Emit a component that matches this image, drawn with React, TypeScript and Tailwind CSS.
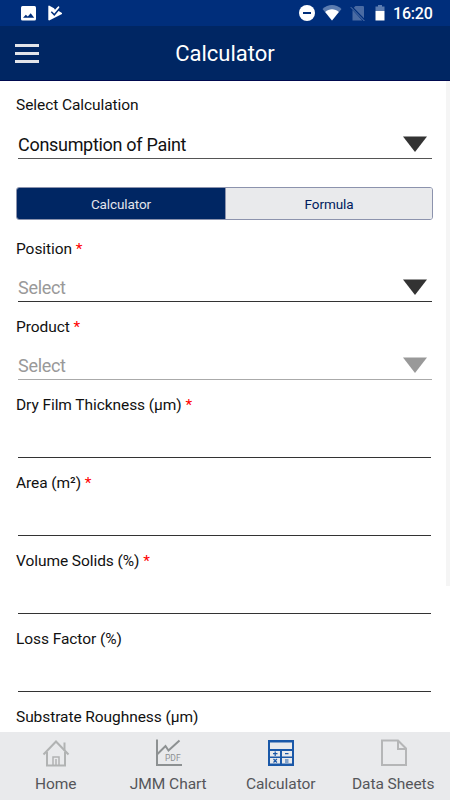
import type { ReactNode } from "react";

type FieldProps = {
  label: string;
  required?: boolean;
  value?: string;
  select?: boolean;
  muted?: boolean;
  disabled?: boolean;
  lead?: boolean;
};

type TabItem = {
  label: string;
  icon: ReactNode;
};

const fields: FieldProps[] = [
  { label: "Position", required: true, value: "Select", select: true, muted: true },
  { label: "Product", required: true, value: "Select", select: true, muted: true, disabled: true },
  { label: "Dry Film Thickness (µm)", required: true },
  { label: "Area (m²)", required: true },
  { label: "Volume Solids (%)", required: true },
  { label: "Loss Factor (%)" },
  { label: "Substrate Roughness (µm)" },
];

function StatusBar() {
  return (
    <div className="flex h-[26px] shrink-0 items-center bg-[#002e7b] pr-[18px] pl-[21px] text-white">
      <svg width="15" height="15" viewBox="0 0 15 15" className="mt-px">
        <rect width="15" height="14.5" rx="1.5" fill="#fff" />
        <path d="M2 11.7 4.8 8.8l2 1.7 2.9-3.2 3.5 4.4z" fill="#002e7b" />
      </svg>
      <svg width="15" height="16" viewBox="0 0 15 16" className="ml-3">
        <path d="M.3 1 1 .4 6 3.2l1 1.6L9.5 2 11 1l.5 2.5-1.6 2L14 8v1L1.2 15.5.3 15z" fill="#fff" />
        <path d="m3.3 6.8 3 3L12 3" fill="none" stroke="#002e7b" strokeWidth="1.5" />
      </svg>

      <div className="ml-auto flex items-center">
        <svg width="16" height="16" viewBox="0 0 16 16">
          <circle cx="8" cy="8" r="8" fill="#fff" />
          <path d="M4 7h8v2H4z" fill="#002e7b" />
        </svg>
        <svg width="20" height="16" viewBox="0 0 20 16" className="ml-[7px]">
          <path d="M.5 4C6-1.2 14-1.2 19.5 4L10 15.5z" fill="#5c7cb0" />
          <path d="M3.2 7C7 3.2 13 3.2 16.8 7L10 15.5z" fill="#fff" />
        </svg>
        <svg width="16" height="17" viewBox="0 0 16 17" className="ml-[8px]">
          <path d="M5.5 1h7.7l.8.8v11.4L3.8 2.8z" fill="#4a6ba3" />
          <path d="M2.5 5v10.5h9.8z" fill="#4a6ba3" />
          <path d="m.8 2.2 13.6 13.8" stroke="#5c7cb0" strokeWidth="1" />
        </svg>
        <svg width="10" height="16" viewBox="0 0 10 16" className="ml-[9px]">
          <path d="M3 0h4v1.5h2.5V6h-9V1.5H3z" fill="#5c7cb0" />
          <path d="M.5 6h9v9.5h-9z" fill="#fff" />
        </svg>
        <span className="mt-[2px] ml-[8px] w-[39px] text-[16px] leading-6 font-medium tracking-[-0.2px] whitespace-nowrap">
          16:20
        </span>
      </div>
    </div>
  );
}

function Header() {
  return (
    <header className="relative flex h-[55px] shrink-0 items-center justify-center border-b border-[#000a4f] bg-[#002663]">
      <button type="button" aria-label="Menu" className="absolute top-[18px] left-[15px] grid gap-[5px]">
        <span className="h-[3px] w-6 bg-[#e2e4ea]" />
        <span className="h-[3px] w-6 bg-[#e2e4ea]" />
        <span className="h-[3px] w-6 bg-[#e2e4ea]" />
      </button>
      <h1 className="text-[22px] text-white">Calculator</h1>
    </header>
  );
}

function Field({ label, required, value, select, muted, disabled, lead }: FieldProps) {
  return (
    <div className="shrink-0 pb-[15px]">
      <div className={`text-[15.5px] leading-5 tracking-[-0.07px] text-[#111] ${lead ? "h-[21px]" : "h-5"}`}>
        {label}
        {required && <span className="text-[#f00]"> *</span>}
      </div>
      <div
        className={`ml-[2px] flex h-[43px] justify-between border-b ${select ? "mr-px" : "mr-[2px]"} ${
          disabled ? "border-[#aaa]" : lead ? "border-[#555]" : "border-[#333]"
        }`}
      >
        <span
          className={`mt-[18px] text-[18px] leading-[22px] tracking-[-0.3px] ${muted ? "text-[#999]" : "text-[#111]"}`}
        >
          {value}
        </span>
        {select && (
          <svg width="24" height="16" viewBox="0 0 24 16" className="mt-5 mr-[5px]">
            <path d="M0 .5h24L12 16z" fill={disabled ? "#999" : "#333"} />
          </svg>
        )}
      </div>
    </div>
  );
}

const HomeIcon = (
  <svg width="28" height="28" viewBox="0 0 28 28" fill="none" stroke="#b1b3b3" strokeWidth="2">
    <path d="M1.5 15.5 14 2.5l12.5 13" />
    <path d="M5 13v13.5h18V13M22.5 11.5v-8" />
    <path d="M11 26v-8h6v8M14 20v6" strokeWidth="1.5" />
  </svg>
);

const ChartIcon = (
  <svg width="28" height="28" viewBox="0 0 28 28" fill="none" stroke="#8d9192" strokeWidth="2">
    <path d="M2 .5V26h25" />
    <path d="m2.5 15 8-8 3 4.5 11-10" />
    <text x="10" y="21.5" fontSize="8.5" fill="#8d9192" stroke="none">
      PDF
    </text>
  </svg>
);

const CalculatorIcon = (
  <svg width="28" height="28" viewBox="0 0 28 28">
    <path d="M1 1h26v26H1z" fill="#1a58a8" />
    <path d="M3 3.5h22V10H3zM3 12h10v5.5H3zM15 12h10v5.5H15zM3 19h10v5.5H3zM15 19h10v5.5H15z" fill="#e9eaec" />
    <path
      d="M6 14.7h4.5M8.2 12.5v4.4M18 14.7h3.5M6.5 20l3.4 3.5M9.9 20l-3.4 3.5M18 21h3.5M18 23h3.5"
      stroke="#1a58a8"
      strokeWidth="1.2"
    />
  </svg>
);

const SheetIcon = (
  <svg width="28" height="28" viewBox="0 0 28 28" fill="none" stroke="#b5b6b7" strokeWidth="2">
    <path d="M2 1.5h16l8 8V26H2z" />
    <path d="M18 1.5V10h8" />
  </svg>
);

const tabs: TabItem[] = [
  { label: "Home", icon: HomeIcon },
  { label: "JMM Chart", icon: ChartIcon },
  { label: "Calculator", icon: CalculatorIcon },
  { label: "Data Sheets", icon: SheetIcon },
];

export default function App() {
  return (
    <div className="flex h-[800px] w-[450px] flex-col overflow-hidden bg-white font-[Roboto,sans-serif]">
      <StatusBar />
      <Header />

      <main className="flex min-h-0 flex-1 overflow-hidden">
        <div className="flex flex-1 flex-col pt-[14px] pr-[13px] pl-4">
          <Field label="Select Calculation" value="Consumption of Paint" select lead />
          <div className="mt-[13px] mb-[19px] flex h-[33px] shrink-0 overflow-hidden rounded-[3px] border border-[#8c93ad] text-[13.5px] tracking-[-0.1px]">
            <button type="button" className="w-[208px] bg-[#002663] pt-px text-[#e3e5ec]">
              Calculator
            </button>
            <button type="button" className="flex-1 border-l border-[#8c93ad] bg-[#e9eaec] pt-px text-[#001b5e]">
              Formula
            </button>
          </div>
          {fields.map((field) => (
            <Field key={field.label} {...field} />
          ))}
        </div>
        <div className="h-[505px] w-1 bg-[#f5f5f5]" />
      </main>

      <nav className="grid h-[68px] shrink-0 grid-cols-4 bg-[#e9eaec]">
        {tabs.map((tab) => (
          <button key={tab.label} type="button" className="flex flex-col items-center pt-[7px] text-[#55565a]">
            {tab.icon}
            <span className="mt-[7px] -ml-px text-[15.5px] leading-5 tracking-[-0.05px] whitespace-nowrap">
              {tab.label}
            </span>
          </button>
        ))}
      </nav>
    </div>
  );
}
